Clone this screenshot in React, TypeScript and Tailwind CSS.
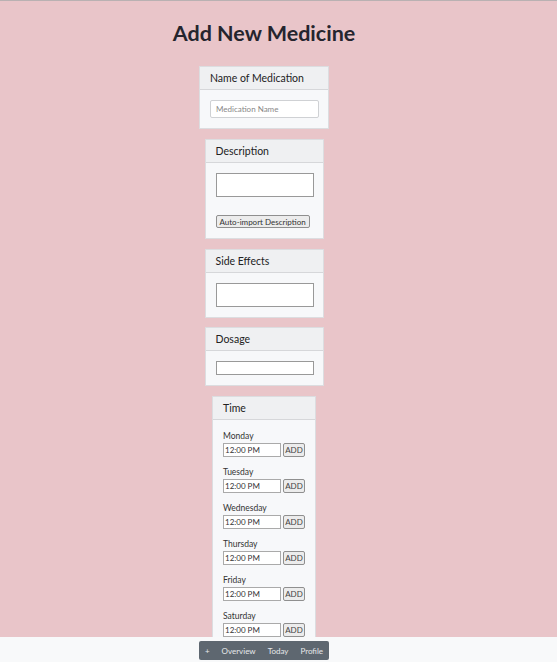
const days = ["Monday", "Tuesday", "Wednesday", "Thursday", "Friday", "Saturday"];

function Card({ title, width, children }: { title: string; width: string; children: React.ReactNode }) {
  return (
    <section className={`${width} shrink-0 border border-[#dcdde0] bg-[#f7f8fa]`}>
      <h2 className="h-[23px] px-[10px] flex items-center bg-[#eff0f2] border-b border-[#d6d7da] text-[10.5px] text-[#222] leading-none">
        {title}
      </h2>
      <div className="p-[10px]">{children}</div>
    </section>
  );
}

export default function App() {
  return (
    <div className="h-[662px] flex flex-col bg-[#e9c5c9] border-t border-[#b9b1b2] font-['Lato',sans-serif]">
      <main className="flex-1 min-h-0 overflow-hidden w-[528px] flex flex-col items-center">
        <h1 className="mt-[17px] mb-[18px] text-[21.5px] font-bold text-[#25252e] leading-[30px]">Add New Medicine</h1>

        <div className="flex flex-col items-center gap-[10px]">
          <Card title="Name of Medication" width="w-[130px]">
            <input
              placeholder="Medication Name"
              className="block w-[109px] h-[18px] bg-white border border-[#cfd1d4] rounded-[2px] px-[5px] text-[8px] placeholder:text-[#888] outline-none"
            />
          </Card>

          <Card title="Description" width="w-[119px]">
            <input className="block w-[98px] h-[24px] bg-white border border-[#999] outline-none" />
            <button className="block mt-[18px] h-[13px] px-[3px] bg-[#ececec] border border-[#8f8f8f] rounded-[2px] text-[8px] text-[#333] leading-none">
              Auto-import Description
            </button>
          </Card>

          <Card title="Side Effects" width="w-[119px]">
            <input className="block w-[98px] h-[24px] bg-white border border-[#999] outline-none" />
          </Card>

          <div className="-mt-[1px]">
            <Card title="Dosage" width="w-[119px]">
              <input className="block w-[98px] h-[14px] bg-white border border-[#999] outline-none" />
            </Card>
          </div>

          <Card title="Time" width="w-[104px]">
            <div className="flex flex-col gap-[9px]">
              {days.map((d) => (
                <div key={d}>
                  <div className="text-[8.5px] text-[#333] leading-[12px] mb-[1px]">{d}</div>
                  <div className="flex items-center gap-[2px]">
                    <input
                      defaultValue="12:00 PM"
                      className="block w-[58px] h-[14px] bg-white border border-[#aaa] px-[1px] text-[8px] text-[#333] outline-none"
                    />
                    <button className="block w-[25px] h-[14px] bg-[#ececec] border border-[#8f8f8f] rounded-[2px] text-[8px] text-[#444] leading-none">
                      ADD
                    </button>
                  </div>
                </div>
              ))}
            </div>
          </Card>
        </div>
      </main>

      <footer className="h-[25px] shrink-0 bg-[#f8f9fa]">
        <div className="w-[528px] flex justify-center pt-[4px]">
          <nav className="w-[130px] h-[19px] bg-[#5e6770] rounded-[2px] flex items-center justify-center gap-[12px] text-[8px] text-[#e6e8ea]">
            <span>+</span>
            <span>Overview</span>
            <span>Today</span>
            <span>Profile</span>
          </nav>
        </div>
      </footer>
    </div>
  );
}
